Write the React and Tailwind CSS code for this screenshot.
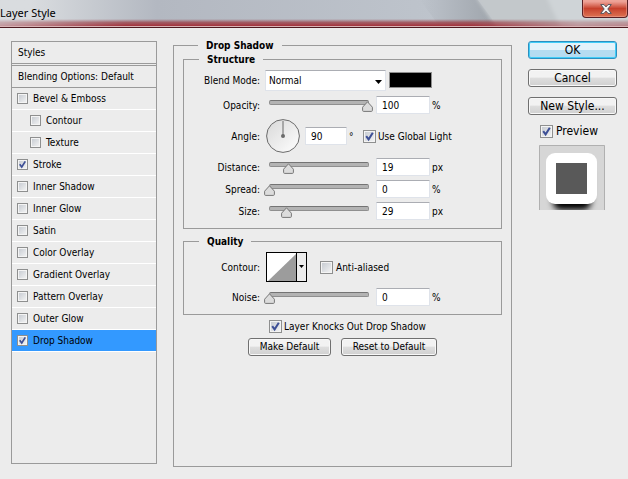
import React from 'react';
import clsx from 'clsx';

const EFFECTS = [
  { id: 'bevel', label: 'Bevel & Emboss' },
  { id: 'contour', label: 'Contour', nested: true },
  { id: 'texture', label: 'Texture', nested: true },
  { id: 'stroke', label: 'Stroke' },
  { id: 'innerShadow', label: 'Inner Shadow' },
  { id: 'innerGlow', label: 'Inner Glow' },
  { id: 'satin', label: 'Satin' },
  { id: 'colorOverlay', label: 'Color Overlay' },
  { id: 'gradientOverlay', label: 'Gradient Overlay' },
  { id: 'patternOverlay', label: 'Pattern Overlay' },
  { id: 'outerGlow', label: 'Outer Glow' },
  { id: 'dropShadow', label: 'Drop Shadow' },
];

function Checkbox({ id, checked, onChange, small }) {
  return (
    <span className={clsx('relative block shrink-0', small ? 'size-[11px]' : 'size-[13px]')}>
      <input
        id={id}
        type="checkbox"
        checked={checked}
        onChange={(e) => onChange(e.target.checked)}
        className="block size-full appearance-none border border-[#8e8f8f] bg-linear-to-br from-[#c3c8cf] to-[#f6f6f6] shadow-[inset_0_0_0_1px_#f4f4f4]"
      />
      {checked && (
        <svg viewBox="0 0 13 13" className="pointer-events-none absolute inset-0 size-full" aria-hidden="true">
          <path d="M3.2 6.2 L5.6 9.4 L9.8 2.8" fill="none" stroke="#3d4f96" strokeWidth="2" />
        </svg>
      )}
    </span>
  );
}

function Group({ title, className, children }) {
  return (
    <fieldset className={clsx('min-w-0 border border-[#9a9a9a]', className)}>
      <legend className="ml-[15px] px-2 text-[10px] leading-[13px] font-bold">{title}</legend>
      {children}
    </fieldset>
  );
}

function RowLabel({ htmlFor, children }) {
  return (
    <label htmlFor={htmlFor} className="w-19 shrink-0 text-right">
      {children}
    </label>
  );
}

function NumberBox({ id, value, onChange, label, className }) {
  return (
    <input
      id={id}
      type="text"
      aria-label={label}
      value={value}
      onChange={(e) => onChange(Number(e.target.value) || 0)}
      className={clsx(
        'h-[18px] rounded-[1px] border border-[#dfe3ea] border-t-[#abadb3] bg-white pl-[5px] outline-none',
        className
      )}
    />
  );
}

function SliderRow({ id, label, unit, value, max, onChange }) {
  return (
    <div className="flex h-[22px] items-center">
      <RowLabel htmlFor={id}>{label}:</RowLabel>
      <div className="relative ml-1 h-[22px] w-[110px] shrink-0 px-[5px] pt-[6px]">
        <input
          id={id}
          type="range"
          min="0"
          max={max}
          value={value}
          onChange={(e) => onChange(Number(e.target.value))}
          className="block h-[5px] w-full appearance-none rounded-[2px] border border-[#8f8f8f] border-t-[#747474] bg-[#b3b3b3] outline-none [&::-webkit-slider-thumb]:h-3 [&::-webkit-slider-thumb]:w-[11px] [&::-webkit-slider-thumb]:appearance-none [&::-webkit-slider-thumb]:opacity-0"
        />
        <svg
          viewBox="0 0 11 11"
          className="pointer-events-none absolute top-[7px] size-[11px]"
          style={{ left: `${Math.round((value / max) * 98)}px` }}
          aria-hidden="true"
        >
          <path
            d="M5.5 0.8 L10.4 6.2 V9.3 Q10.4 10.4 9.4 10.4 H1.6 Q0.6 10.4 0.6 9.3 V6.2 Z"
            fill="#dcdcdc"
            stroke="#777777"
            strokeLinejoin="round"
          />
        </svg>
      </div>
      <NumberBox label={`${label} value`} value={value} onChange={onChange} className="ml-[2px] w-[54px]" />
      <span className="ml-[2px]">{unit}</span>
    </div>
  );
}

function Button({ primary, className, children }) {
  return (
    <button
      type="button"
      className={clsx(
        'h-[18px] rounded-[3px] border leading-4',
        primary
          ? 'border-[#2c8fc0] bg-linear-to-b from-[#e4f3fb] from-50% to-[#b5dcf1] to-50% shadow-[inset_0_0_0_1px_#41cdf8]'
          : 'border-[#707070] bg-linear-to-b from-[#f2f2f2] from-45% via-[#dedede] via-50% to-[#d0d0d0] shadow-[inset_0_0_0_1px_#f8f8f8]',
        className
      )}
    >
      {children}
    </button>
  );
}

function TitleBar() {
  return (
    <header className="relative h-7 shrink-0 overflow-hidden border-b border-[#4e1a20] bg-linear-to-r from-[#d9dcdf] from-5% via-[#b3b8c1] via-25% to-[#bec4cc] to-70%">
      {/* Glass reflections and the red tint along the lower edge */}
      <svg viewBox="0 0 628 27" preserveAspectRatio="none" className="absolute inset-0 size-full" aria-hidden="true">
        <defs>
          <linearGradient id="tint" x1="0" y1="0" x2="0" y2="1">
            <stop offset="0" stopColor="#8f3038" stopOpacity="0" />
            <stop offset="0.5" stopColor="#9a3a42" stopOpacity="0.75" />
            <stop offset="1" stopColor="#a5323b" />
          </linearGradient>
          <linearGradient id="tintFade" x1="0" y1="0" x2="1" y2="0">
            <stop offset="0" stopColor="#fff" stopOpacity="0.4" />
            <stop offset="0.2" stopColor="#fff" />
            <stop offset="0.75" stopColor="#fff" />
            <stop offset="0.92" stopColor="#fff" stopOpacity="0.4" />
            <stop offset="1" stopColor="#fff" stopOpacity="0.5" />
          </linearGradient>
          <linearGradient id="shade" x1="0" y1="0" x2="1" y2="0">
            <stop offset="0" stopColor="#9da3aa" stopOpacity="0" />
            <stop offset="1" stopColor="#9da3aa" />
          </linearGradient>
          <mask id="tintMask">
            <rect width="628" height="27" fill="url(#tintFade)" />
          </mask>
          <filter id="edge">
            <feGaussianBlur stdDeviation="2 0" />
          </filter>
        </defs>
        <path d="M420 0 H478 L498 27 H440 Z" fill="url(#shade)" />
        <path d="M475 -4 H640 V31 H498 Z" fill="#c3c8cb" filter="url(#edge)" />
        <path d="M546 -4 H640 V31 H562 Z" fill="#cfd4d7" filter="url(#edge)" />
        <g mask="url(#tintMask)">
          <rect y="19" width="628" height="7" fill="url(#tint)" />
        </g>
        <rect y="26" width="628" height="1" fill="#d9b4b6" />
      </svg>
      <h1 className="relative font-['Noto_Sans','Open_Sans',sans-serif] text-[11px] leading-[26px]">Layer Style</h1>
      <button
        type="button"
        aria-label="Close"
        className="absolute top-0 right-0 flex h-[18px] w-[46px] items-center justify-center rounded-b-[4px] border border-t-0 border-[#5a2024] bg-linear-to-b from-[#eda095] from-10% via-[#c6402c] via-50% to-[#dd7253] shadow-[inset_0_0_0_1px_#f0a79b80]"
      >
        <svg viewBox="0 0 12 10" className="ml-[2px] h-[10px] w-3" aria-hidden="true">
          <path
            d="M0.7 0.6 H4 L6 2.9 L8 0.6 H11.3 L7.8 5 L11.3 9.4 H8 L6 7.1 L4 9.4 H0.7 L4.2 5 Z"
            fill="#f6f6f6"
            stroke="#55545c"
            strokeLinejoin="round"
          />
        </svg>
      </button>
    </header>
  );
}

function StyleList({ enabled, onToggle, selected, onSelect }) {
  return (
    <aside className="mt-[13px] mb-[3px] w-[146px] shrink-0 border border-[#9a9a9a]">
      <h2 className="h-[22px] border-b border-[#9a9a9a] pl-[6px] leading-[22px]">Styles</h2>
      <h2 className="mt-px h-[23px] border-y border-[#9a9a9a] pl-[6px] leading-[22px]">Blending Options: Default</h2>
      <ul>
        {EFFECTS.map((effect) => (
          <li
            key={effect.id}
            onClick={() => onSelect(effect.id)}
            className={clsx(
              'flex h-[22px] items-center gap-[5px] border-b border-white',
              effect.nested ? 'pl-[18px]' : 'pl-[5px]',
              selected === effect.id && 'bg-[#3399ff]'
            )}
          >
            <Checkbox
              small
              id={effect.id}
              checked={enabled.includes(effect.id)}
              onChange={() => onToggle(effect.id)}
            />
            <label htmlFor={effect.id}>{effect.label}</label>
          </li>
        ))}
      </ul>
    </aside>
  );
}

export default function App() {
  const [enabled, setEnabled] = React.useState(['stroke', 'dropShadow']);
  const [selected, setSelected] = React.useState('dropShadow');
  const [settings, setSettings] = React.useState({
    opacity: 100,
    angle: 90,
    globalLight: true,
    distance: 19,
    spread: 0,
    size: 29,
    antiAliased: false,
    noise: 0,
    knockOut: true,
    preview: true,
  });

  const update = (key) => (value) => setSettings((prev) => ({ ...prev, [key]: value }));

  const toggleEffect = (id) => {
    setEnabled((prev) => (prev.includes(id) ? prev.filter((x) => x !== id) : [...prev, id]));
  };

  return (
    <div className="flex min-h-screen flex-col bg-[#ececec] font-['DejaVu_Sans_Condensed','Noto_Sans',sans-serif] text-[10px] text-black">
      <TitleBar />
      <main className="flex flex-1 gap-4 px-[11px] pb-3">
        <StyleList enabled={enabled} onToggle={toggleEffect} selected={selected} onSelect={setSelected} />

        <Group title="Drop Shadow" className="mt-[11px] flex-1 px-[9px] pt-px">
          <Group title="Structure" className="pb-[6px]">
            <div className="flex h-7 items-center">
              <RowLabel htmlFor="blend">Blend Mode:</RowLabel>
              <div className="relative ml-[5px] h-[21px] w-[121px]">
                <select
                  id="blend"
                  className="size-full appearance-none border border-[#dfe3ea] border-t-[#abadb3] bg-white pl-[3px] outline-none"
                >
                  <option>Normal</option>
                  <option>Multiply</option>
                  <option>Screen</option>
                </select>
                <svg viewBox="0 0 7 4" className="pointer-events-none absolute top-[10px] right-[4px] h-1 w-[7px]" aria-hidden="true">
                  <path d="M0 0 H7 L3.5 4 Z" />
                </svg>
              </div>
              <button type="button" aria-label="Shadow color" className="ml-[3px] h-4 w-[43px] border border-[#8f8f8f] bg-black" />
            </div>

            <SliderRow id="opacity" label="Opacity" unit="%" max={100} value={settings.opacity} onChange={update('opacity')} />

            <div className="flex h-10 items-center">
              <RowLabel htmlFor="angle">Angle:</RowLabel>
              <svg viewBox="0 0 34 34" className="ml-[6px] size-[34px] shrink-0" aria-hidden="true">
                <defs>
                  <linearGradient id="dial" x1="0" y1="0" x2="1" y2="1">
                    <stop offset="0" stopColor="#d8d8d8" />
                    <stop offset="1" stopColor="#ffffff" />
                  </linearGradient>
                </defs>
                <circle cx="17" cy="17" r="16.4" fill="url(#dial)" stroke="#6b6b6b" />
                <path d="M17 2 V17" stroke="#6b6b6b" />
                <circle cx="17" cy="17" r="2" fill="#6b6b6b" />
              </svg>
              <NumberBox id="angle" value={settings.angle} onChange={update('angle')} className="ml-[5px] w-[42px]" />
              <span className="ml-[2px] w-[14px]">°</span>
              <Checkbox id="global" checked={settings.globalLight} onChange={update('globalLight')} />
              <label htmlFor="global" className="ml-[2px] whitespace-nowrap">Use Global Light</label>
            </div>

            <SliderRow id="distance" label="Distance" unit="px" max={100} value={settings.distance} onChange={update('distance')} />
            <SliderRow id="spread" label="Spread" unit="%" max={100} value={settings.spread} onChange={update('spread')} />
            <SliderRow id="size" label="Size" unit="px" max={167} value={settings.size} onChange={update('size')} />
          </Group>

          <Group title="Quality" className="mt-[6px] pb-[6px]">
            <div className="flex h-[38px] items-center">
              <RowLabel htmlFor="shape">Contour:</RowLabel>
              <button id="shape" type="button" aria-label="Contour" className="ml-[6px] block h-[30px] w-[41px]">
                <svg viewBox="0 0 41 30" className="block size-full" aria-hidden="true">
                  <rect x="0.5" y="0.5" width="40" height="29" fill="#ececec" stroke="#000" />
                  <rect x="1" y="1" width="29" height="28" fill="#fff" />
                  <path d="M2 29 L30 2 V29 Z" fill="#9c9c9c" />
                  <path d="M30.5 1 V29" stroke="#000" />
                  <path d="M33 13 H38 L35.5 16 Z" />
                </svg>
              </button>
              <span className="ml-[13px]">
                <Checkbox id="anti" checked={settings.antiAliased} onChange={update('antiAliased')} />
              </span>
              <label htmlFor="anti" className="ml-[3px] whitespace-nowrap">Anti-aliased</label>
            </div>
            <SliderRow id="noise" label="Noise" unit="%" max={100} value={settings.noise} onChange={update('noise')} />
          </Group>

          <div className="mt-[5px] flex h-[13px] items-center gap-[2px] pl-[86px]">
            <Checkbox id="knock" checked={settings.knockOut} onChange={update('knockOut')} />
            <label htmlFor="knock" className="whitespace-nowrap">Layer Knocks Out Drop Shadow</label>
          </div>
          <div className="mt-[5px] flex gap-[10px] pl-[65px]">
            <Button className="w-[83px]">Make Default</Button>
            <Button className="w-24">Reset to Default</Button>
          </div>
        </Group>

        <div className="mt-[13px] flex w-[89px] shrink-0 flex-col text-[12px]">
          <div className="flex flex-col gap-[10px]">
            <Button primary>OK</Button>
            <Button>Cancel</Button>
            <Button>New Style...</Button>
          </div>
          <div className="mt-2 flex h-4 items-center gap-[3px] pl-3">
            <Checkbox id="preview" checked={settings.preview} onChange={update('preview')} />
            <label htmlFor="preview">Preview</label>
          </div>
          <svg viewBox="0 0 66 65" className="mt-[6px] ml-[11px] h-[65px] w-[66px]" aria-hidden="true">
            <defs>
              <filter id="soft" x="-30%" y="-30%" width="160%" height="160%">
                <feGaussianBlur stdDeviation="3" />
              </filter>
            </defs>
            <rect width="66" height="65" fill="#d6d6d6" />
            <rect x="14" y="22" width="38" height="43" rx="8" fill="#000" filter="url(#soft)" />
            <rect x="7" y="8" width="51" height="51" rx="9" fill="#fff" />
            <rect x="17" y="18" width="31" height="31" fill="#595959" />
            <path d="M0.5 65 V0.5 H65.5 V65" fill="none" stroke="#b0b0b0" />
          </svg>
        </div>
      </main>
    </div>
  );
}
